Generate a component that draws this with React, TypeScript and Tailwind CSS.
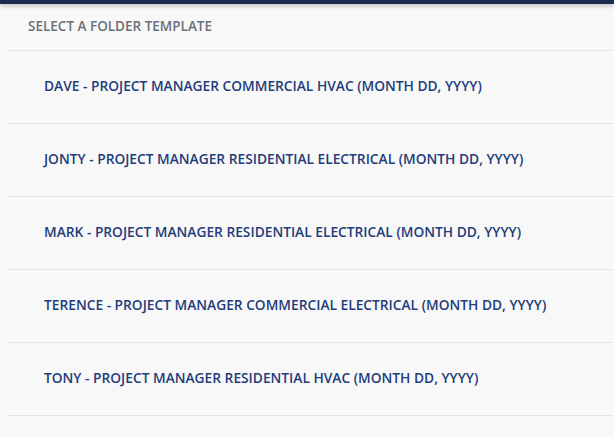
import React from 'react';

const templates = [
  'DAVE - PROJECT MANAGER COMMERCIAL HVAC (MONTH DD, YYYY)',
  'JONTY - PROJECT MANAGER RESIDENTIAL ELECTRICAL (MONTH DD, YYYY)',
  'MARK - PROJECT MANAGER RESIDENTIAL ELECTRICAL (MONTH DD, YYYY)',
  'TERENCE - PROJECT MANAGER COMMERCIAL ELECTRICAL (MONTH DD, YYYY)',
  'TONY - PROJECT MANAGER RESIDENTIAL HVAC (MONTH DD, YYYY)',
];

const App: React.FC = () => {
  return (
    <div
      className="min-h-screen bg-[#f8f8f8]"
      style={{ fontFamily: '"Open Sans", "Noto Sans", sans-serif' }}
    >
      <div className="h-1 bg-[#1b2b4f] shadow-[0_2px_4px_rgba(0,0,0,0.25)]" />
      <div className="pl-2">
        <div className="h-[47px] flex items-center pl-5 pb-[2px] border-b border-[#e4e4e4]">
          <span className="text-[13.5px] font-semibold text-[#6b6f78]">SELECT A FOLDER TEMPLATE</span>
        </div>
        {templates.map((t) => (
          <div
            key={t}
            className="h-[73px] flex items-center pl-9 pb-[2px] border-b border-[#e4e4e4] cursor-pointer"
          >
            <span className="text-[13.75px] font-semibold text-[#233c7a]">{t}</span>
          </div>
        ))}
      </div>
    </div>
  );
};

export default App;
